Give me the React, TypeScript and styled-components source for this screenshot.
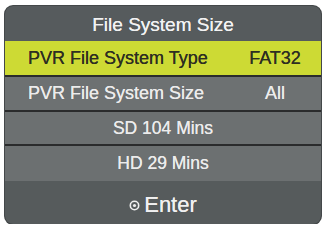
import styled, { createGlobalStyle } from "styled-components"

const GlobalStyle = createGlobalStyle`
  html, body {
    margin: 0;
    padding: 0;
    background: #ffffff;
  }
  body {
    font-family: "Liberation Sans", Arial, sans-serif;
  }
`

const Page = styled.div`
  padding: 6px 0 0 5px;
`

const Panel = styled.div`
  width: 316px;
  border-radius: 8px;
  overflow: hidden;
  background: #2b2d2e;
  box-shadow: 0 0 0 1px #44484a;
  display: flex;
  flex-direction: column;
`

const TitleBar = styled.div`
  height: 35px;
  box-sizing: border-box;
  padding-top: 2px;
  background: #565b5d;
  color: #f2f2f2;
  font-size: 19px;
  text-shadow: 0 0 0.6px #f2f2f2;
  display: flex;
  align-items: center;
  justify-content: center;
`

const Row = styled.div<{ $active?: boolean; $height: number; $sep?: boolean }>`
  height: ${({ $height }) => $height}px;
  background: ${({ $active }) => ($active ? "#cdda34" : "#6d7172")};
  color: ${({ $active }) => ($active ? "#2d2e22" : "#ececec")};
  text-shadow: 0 0 0.6px ${({ $active }) => ($active ? "#2d2e22" : "#ececec")};
  border-bottom: ${({ $sep }) => ($sep ? "2px solid #2a2b2c" : "none")};
  font-size: 18px;
  display: flex;
  align-items: center;
  padding: 0 0 0 23px;
`

const Label = styled.span`
  flex: 1;
`

const Value = styled.span`
  width: 92px;
  text-align: center;
`

const InfoRow = styled.div<{ $height: number; $sep?: boolean }>`
  height: ${({ $height }) => $height}px;
  background: #6c7071;
  color: #ececec;
  text-shadow: 0 0 0.6px #ececec;
  border-bottom: ${({ $sep }) => ($sep ? "2px solid #2a2b2c" : "none")};
  font-size: 17.5px;
  display: flex;
  align-items: center;
  justify-content: center;
`

const Footer = styled.div`
  height: 43px;
  box-sizing: border-box;
  padding-top: 5px;
  background: #565b5c;
  color: #f0f0f0;
  text-shadow: 0 0 0.6px #f0f0f0;
  font-size: 22px;
  display: flex;
  align-items: center;
  justify-content: center;
  gap: 4px;
`

function EnterIcon() {
  return (
    <svg width="11" height="11" viewBox="0 0 11 11">
      <circle cx="5.5" cy="5.5" r="4.2" fill="none" stroke="#eeeeee" strokeWidth="1.6" />
      <circle cx="5.5" cy="5.5" r="1.6" fill="#eeeeee" />
    </svg>
  )
}

export default function App() {
  return (
    <Page>
      <GlobalStyle />
      <Panel>
        <TitleBar>File System Size</TitleBar>
        <Row $active $height={34} $sep>
          <Label>PVR File System Type</Label>
          <Value>FAT32</Value>
        </Row>
        <Row $height={33} $sep>
          <Label>PVR File System Size</Label>
          <Value>All</Value>
        </Row>
        <InfoRow $height={32} $sep>SD 104 Mins</InfoRow>
        <InfoRow $height={35}>HD 29 Mins</InfoRow>
        <Footer>
          <EnterIcon />
          <span>Enter</span>
        </Footer>
      </Panel>
    </Page>
  )
}
